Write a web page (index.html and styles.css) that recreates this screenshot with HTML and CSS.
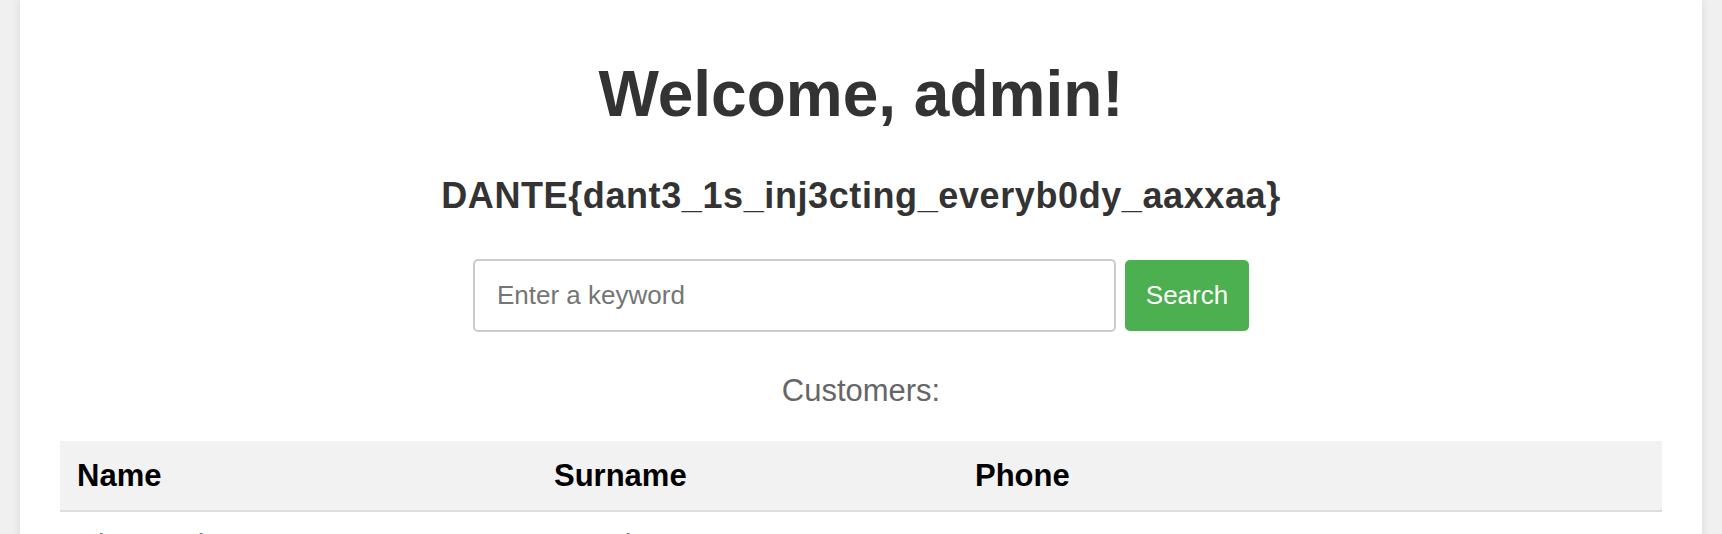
FILE: index.html
```html
<!DOCTYPE html>
<html lang="en">
<head>
<meta charset="utf-8">
<title>Dashboard</title>
<link rel="stylesheet" href="styles.css">
</head>
<body>
<div class="container">
  <h1 class="title">Welcome, admin!</h1>
  <h2 class="flag">DANTE{dant3_1s_inj3cting_everyb0dy_aaxxaa}</h2>
  <form class="search">
    <input class="search-input" type="text" placeholder="Enter a keyword">
    <button class="search-btn" type="button">Search</button>
  </form>
  <p class="caption">Customers:</p>
  <table class="customers">
    <colgroup>
      <col class="c-name">
      <col class="c-surname">
      <col class="c-phone">
    </colgroup>
    <thead>
      <tr><th>Name</th><th>Surname</th><th>Phone</th></tr>
    </thead>
    <tbody>
      <tr><td>Alessandro</td><td>Rossi</td><td>+39 333 1234567</td></tr>
      <tr><td>Giulia</td><td>Bianchi</td><td>+39 333 7654321</td></tr>
    </tbody>
  </table>
</div>
</body>
</html>
```
FILE: styles.css
```css
html, body {
  margin: 0;
  padding: 0;
}
body {
  background: #f0f0f0;
  font-family: "Liberation Sans", Arial, Helvetica, sans-serif;
  color: #333;
}
.container {
  margin: 0 20px;
  background: #fff;
  box-shadow: 0 0 10px rgba(0, 0, 0, 0.1);
  padding: 57px 40px 40px;
  min-height: 700px;
  text-align: center;
}
.title {
  margin: 0;
  font-size: 64px;
  font-weight: bold;
  color: #333;
  line-height: normal;
}
.flag {
  margin: 44px 0 0;
  font-size: 36px;
  letter-spacing: 0.6px;
  font-weight: bold;
  color: #333;
  line-height: normal;
}
.search {
  margin-top: 42px;
  display: flex;
  justify-content: center;
  align-items: center;
  gap: 9px;
}
.search-input {
  box-sizing: border-box;
  width: 643px;
  height: 73px;
  border: 2px solid #ccc;
  border-radius: 5px;
  padding: 0 22px;
  font-family: inherit;
  font-size: 26px;
  color: #333;
  outline: none;
}
.search-input::placeholder {
  color: #757575;
}
.search-btn {
  box-sizing: border-box;
  width: 124px;
  height: 71px;
  border: none;
  border-radius: 5px;
  background: #4caf50;
  color: #fff;
  font-family: inherit;
  font-size: 26px;
  padding: 0;
}
.caption {
  margin: 41px 0 0;
  font-size: 31px;
  color: #666;
  line-height: normal;
}
.customers {
  margin-top: 32px;
  width: 100%;
  border-collapse: collapse;
  text-align: left;
}
.c-name { width: 477px; }
.c-surname { width: 421px; }
.customers th {
  background: #f2f2f2;
  color: #000;
  font-size: 31px;
  font-weight: bold;
  padding: 17px 17px 16px;
  border-bottom: 2px solid #ddd;
  line-height: normal;
}
.customers td {
  color: #777;
  font-size: 31px;
  padding: 16px 17px;
  border-bottom: 1px solid #ddd;
}
```
